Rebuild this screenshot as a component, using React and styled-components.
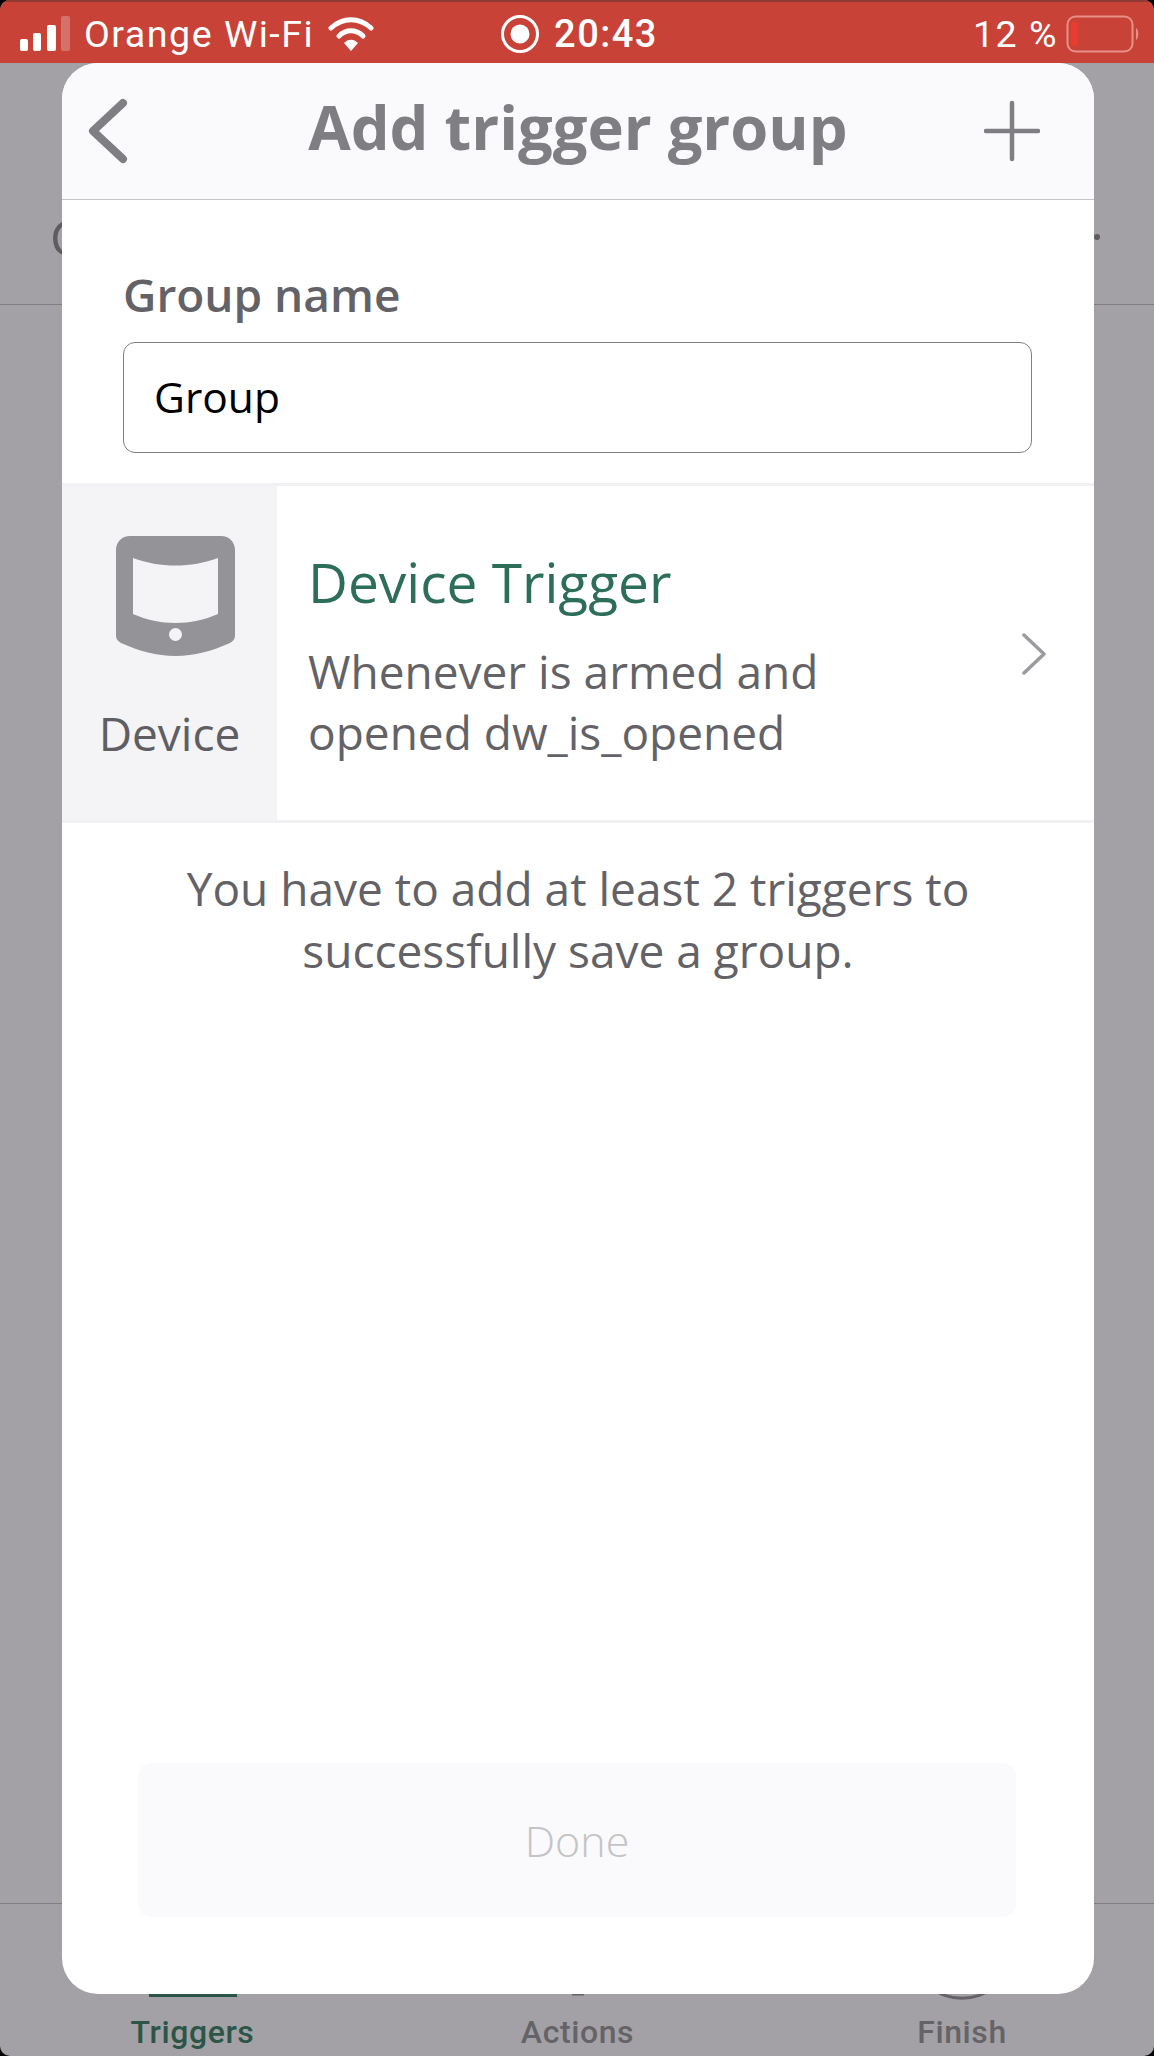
import React from "react";
import styled, { createGlobalStyle } from "styled-components";

const GlobalStyle = createGlobalStyle`
  html, body {
    margin: 0;
    padding: 0;
    background: #000;
  }
  * {
    box-sizing: border-box;
  }
`;

const Screen = styled.div`
  position: relative;
  width: 1154px;
  height: 2056px;
  overflow: hidden;
  display: flex;
  flex-direction: column;
  background: #a3a1a5;
  border-radius: 10px;
  font-family: "Open Sans", sans-serif;
`;

const StatusBar = styled.div`
  height: 63px;
  flex: none;
  display: grid;
  grid-template-columns: 1fr auto 1fr;
  align-items: center;
  padding: 2px 14px 0 20px;
  background: #c94238;
  border-top: 2px solid #8e3a34;
  color: #fff;
  font-family: Roboto, sans-serif;
  font-size: 37.600px;
  letter-spacing: 1.5px;
`;

const StatusSide = styled.div`
  display: flex;
  align-items: center;
  gap: ${(props) => props.$gap || 0}px;
  justify-content: ${(props) => (props.$end ? "flex-end" : "flex-start")};
`;

const Clock = styled.div`
  display: flex;
  align-items: center;
  gap: 14px;
  padding-right: 2px;
  font-size: 38px;
  font-weight: 500;
`;

const Behind = styled.div`
  flex: 1;
  display: flex;
  flex-direction: column;
`;

const BehindHeader = styled.div`
  height: 242px;
  flex: none;
  display: flex;
  justify-content: space-between;
  align-items: center;
  padding: 106px 54px 0 50px;
  border-bottom: 1px solid #807e82;
  color: #5e5c60;
  font-size: 50px;
`;

const BehindDot = styled.span`
  width: 6px;
  height: 6px;
  border-radius: 50%;
  background: #5e5c60;
`;

const BehindBody = styled.div`
  flex: 1;
`;

const TabBar = styled.div`
  height: 153px;
  flex: none;
  display: grid;
  grid-template-columns: 385px 385px 384px;
  border-top: 1px solid #807e82;
`;

const Tab = styled.div`
  display: flex;
  flex-direction: column;
  align-items: center;
  justify-content: flex-end;
  padding-bottom: 5px;
  font-family: Roboto, sans-serif;
  font-weight: 500;
  font-size: 32px;
  letter-spacing: 0.6px;
  color: ${(props) => (props.$active ? "#2b5647" : "#656367")};
`;

const TabMark = styled.span`
  width: 88px;
  height: 4px;
  margin-bottom: 16px;
  background: #2b5647;
`;

const TabIconStub = styled.svg`
  display: block;
  margin-bottom: 13px;
`;

const Modal = styled.div`
  position: absolute;
  left: 62px;
  top: 63px;
  width: 1032px;
  height: 1931px;
  display: flex;
  flex-direction: column;
  background: #fff;
  border-radius: 36px;
  overflow: hidden;
`;

const ModalHeader = styled.div`
  height: 137px;
  flex: none;
  display: grid;
  grid-template-columns: 140px 1fr 140px;
  align-items: center;
  background: #fafafc;
  border-bottom: 1px solid #c5c4c8;
`;

const IconSlot = styled.div`
  display: flex;
  justify-content: ${(props) => (props.$end ? "flex-end" : "flex-start")};
  padding: ${(props) => (props.$end ? "0 54px 0 0" : "0 0 0 24px")};
`;

const Title = styled.h1`
  margin: 0 0 10px;
  text-align: center;
  font-size: 61.500px;
  line-height: 84px;
  font-weight: 700;
  color: #7f7e82;
`;

const NameBlock = styled.div`
  flex: none;
  padding: 64px 62px 30px 61px;
`;

const Label = styled.label`
  display: block;
  margin-bottom: 18px;
  font-size: 46px;
  line-height: 60px;
  font-weight: 600;
  color: #636266;
`;

const NameInput = styled.div`
  height: 111px;
  display: flex;
  align-items: center;
  padding: 0 0 2px 30px;
  border: 1.5px solid #808083;
  border-radius: 12px;
  font-size: 42.500px;
  color: #000;
`;

const TriggerRow = styled.div`
  height: 340px;
  flex: none;
  display: flex;
  border-top: 3px solid #f1f0f3;
  border-bottom: 3px solid #f1f0f3;
`;

const TypeCell = styled.div`
  width: 215px;
  flex: none;
  display: flex;
  flex-direction: column;
  align-items: center;
  padding-top: 50px;
  background: #f4f3f6;
  font-size: 46px;
  color: #5f5e62;
`;

const TypeIcon = styled.div`
  margin-left: 12px;
  line-height: 0;
`;

const TypeLabel = styled.span`
  margin-top: 47px;
  line-height: 60px;
`;

const TriggerInfo = styled.div`
  flex: 1;
  padding: 61px 0 0 31px;
`;

const TriggerTitle = styled.div`
  font-size: 55px;
  line-height: 70px;
  color: #2c6e58;
`;

const TriggerText = styled.div`
  margin-top: 24px;
  font-size: 46px;
  line-height: 61px;
  color: #636266;
`;

const ChevronSlot = styled.div`
  width: 60px;
  flex: none;
  margin-right: 30px;
  padding-top: 2px;
  display: flex;
  align-items: center;
  justify-content: center;
`;

const Hint = styled.p`
  margin: 34px auto 0;
  width: 900px;
  text-align: center;
  font-size: 46px;
  line-height: 62px;
  color: #636266;
`;

const Footer = styled.div`
  margin-top: auto;
  padding: 0 78px 77px 76px;
`;

const DoneButton = styled.div`
  height: 154px;
  display: flex;
  align-items: center;
  justify-content: center;
  background: #faf9fc;
  border-radius: 14px;
  font-size: 43px;
  font-weight: 300;
  color: #c4c3c7;
`;

const SignalBars = () => (
  <svg width="50" height="36" viewBox="0 0 50 36">
    <rect x="0" y="23" width="8" height="12" rx="2" fill="#fff" />
    <rect x="13" y="17" width="8" height="18" rx="2" fill="#fff" />
    <rect x="27" y="9" width="9" height="26" rx="2" fill="#fff" />
    <rect x="41" y="0" width="9" height="35" rx="2" fill="#fff" opacity="0.25" />
  </svg>
);

const WifiIcon = () => (
  <svg width="46" height="36" viewBox="0 0 46 36" fill="none">
    <path d="M3 12C15 1 31 1 43 12" stroke="#fff" strokeWidth="5" strokeLinecap="round" />
    <path d="M11 20C18 13 28 13 35 20" stroke="#fff" strokeWidth="5" strokeLinecap="round" />
    <path d="M16 27C20 22.500 26 22.500 30 27L23 35Z" fill="#fff" />
  </svg>
);

const RecordIcon = () => (
  <svg width="40" height="40" viewBox="0 0 40 40" fill="none">
    <circle cx="20" cy="20" r="17.500" stroke="#fff" strokeWidth="3" />
    <circle cx="20" cy="20" r="9.500" fill="#fff" />
  </svg>
);

const BatteryIcon = () => (
  <svg width="74" height="38" viewBox="0 0 74 38" fill="none">
    <rect x="1.500" y="1.500" width="65" height="35" rx="8" stroke="#e88f88" strokeWidth="2" />
    <rect x="5" y="7" width="7" height="24" rx="2" fill="#ea3b2e" />
    <path d="M70 13C73 14 73 24 70 25Z" fill="#e88f88" />
  </svg>
);

const BackIcon = () => (
  <svg width="44" height="70" viewBox="0 0 44 70" fill="none">
    <path d="M37 7L7 35L37 63" stroke="#7f7e82" strokeWidth="8" strokeLinecap="round" strokeLinejoin="round" />
  </svg>
);

const PlusIcon = () => (
  <svg width="56" height="62" viewBox="0 0 56 62" fill="none">
    <path d="M28 3V59M2 31H54" stroke="#7f7e82" strokeWidth="4.500" strokeLinecap="round" />
  </svg>
);

const DeviceIcon = () => (
  <svg width="119" height="120" viewBox="0 0 119 120">
    <path
      fillRule="evenodd"
      fill="#949397"
      d="M14 0H105C113 0 119 6 119 14V100C119 103 117 105 114 107C96 115 78 120 59.500 120C41 120 23 115 5 107C2 105 0 103 0 100V14C0 6 6 0 14 0ZM17 22V78C44 90 75 90 102 78V22C75 32 44 32 17 22ZM59.500 92A6.500 6.500 0 1 0 59.500 105A6.500 6.500 0 1 0 59.500 92Z"
    />
  </svg>
);

const ChevronIcon = () => (
  <svg width="26" height="42" viewBox="0 0 26 42" fill="none">
    <path d="M3 2L23 21L3 40" stroke="#9b9a9e" strokeWidth="3.500" strokeLinecap="round" strokeLinejoin="round" />
  </svg>
);

export default function App() {
  return (
    <>
      <GlobalStyle />
      <Screen>
        <StatusBar>
          <StatusSide $gap={14}>
            <SignalBars />
            <span>Orange Wi-Fi</span>
            <WifiIcon />
          </StatusSide>
          <Clock>
            <RecordIcon />
            <span>20:43</span>
          </Clock>
          <StatusSide $end $gap={8}>
            <span>12 %</span>
            <BatteryIcon />
          </StatusSide>
        </StatusBar>
        <Behind>
          <BehindHeader>
            <span>C</span>
            <BehindDot />
          </BehindHeader>
          <BehindBody />
          <TabBar>
            <Tab $active>
              <TabMark />
              Triggers
            </Tab>
            <Tab>
              <TabIconStub width="26" height="14" viewBox="0 0 26 14" fill="none">
                <path d="M3 2H23M7 8H19" stroke="#656367" strokeWidth="3" />
              </TabIconStub>
              Actions
            </Tab>
            <Tab>
              <TabIconStub width="64" height="14" viewBox="0 0 64 14" fill="none">
                <path d="M2 1C14 16 50 16 62 1" stroke="#656367" strokeWidth="3" />
              </TabIconStub>
              Finish
            </Tab>
          </TabBar>
        </Behind>
        <Modal>
          <ModalHeader>
            <IconSlot>
              <BackIcon />
            </IconSlot>
            <Title>Add trigger group</Title>
            <IconSlot $end>
              <PlusIcon />
            </IconSlot>
          </ModalHeader>
          <NameBlock>
            <Label>Group name</Label>
            <NameInput>Group</NameInput>
          </NameBlock>
          <TriggerRow>
            <TypeCell>
              <TypeIcon>
                <DeviceIcon />
              </TypeIcon>
              <TypeLabel>Device</TypeLabel>
            </TypeCell>
            <TriggerInfo>
              <TriggerTitle>Device Trigger</TriggerTitle>
              <TriggerText>
                Whenever is armed and
                <br />
                opened dw_is_opened
              </TriggerText>
            </TriggerInfo>
            <ChevronSlot>
              <ChevronIcon />
            </ChevronSlot>
          </TriggerRow>
          <Hint>You have to add at least 2 triggers to successfully save a group.</Hint>
          <Footer>
            <DoneButton>Done</DoneButton>
          </Footer>
        </Modal>
      </Screen>
    </>
  );
}
